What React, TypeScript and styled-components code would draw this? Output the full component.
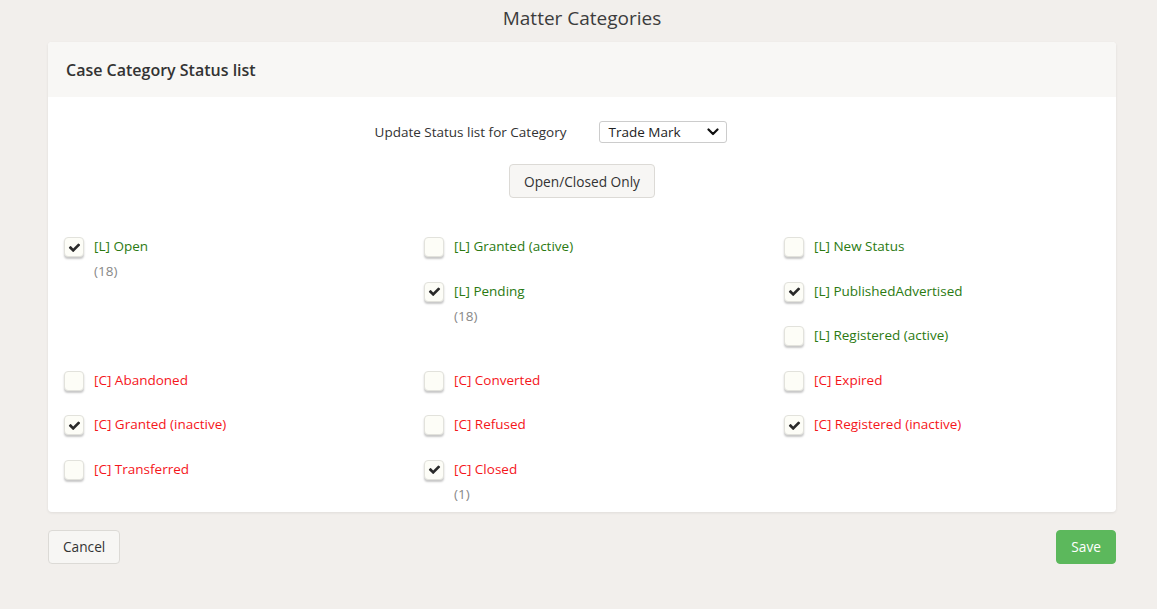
import * as React from 'react'
import styled, { createGlobalStyle } from 'styled-components'

const GlobalStyle = createGlobalStyle`
  html, body {
    margin: 0;
    padding: 0;
    background: #f2efec;
    font-family: 'Open Sans', 'Liberation Sans', sans-serif;
    color: #333;
  }
`

const Page = styled.div`
  width: 1068px;
  margin-left: 48px;
`

const PageTitle = styled.h1`
  margin: 0 0 6px;
  height: 36px;
  line-height: 36px;
  font-size: 19px;
  font-weight: 400;
  color: #3c3c3c;
  text-align: center;
`

const Card = styled.div`
  background: #fff;
  border-radius: 4px;
  box-shadow: 0 1px 3px rgb(0 0 0 / 8%);
  overflow: hidden;
`

const CardHeader = styled.div`
  height: 55px;
  display: flex;
  align-items: center;
  padding: 0 18px;
  background: #f8f7f5;
  font-size: 16px;
  font-weight: 600;
  color: #333;
`

const CardBody = styled.div`
  padding: 24px 16px 8px;
`

const CategoryRow = styled.div`
  display: flex;
  justify-content: center;
  align-items: center;
  gap: 33px;
  font-size: 13.5px;
  padding-right: 62px;
`

const SelectWrap = styled.div`
  position: relative;
  width: 128px;
  height: 22px;
`

const Select = styled.select`
  appearance: none;
  width: 100%;
  height: 100%;
  border: 1px solid #ccc;
  border-radius: 3px;
  background: #fff;
  padding: 0 8px;
  font-family: inherit;
  font-size: 13.5px;
  color: #222;
`

const Chevron = styled.svg`
  position: absolute;
  right: 8px;
  top: 7px;
  pointer-events: none;
`

const Center = styled.div`
  display: flex;
  justify-content: center;
  margin-top: 21px;
`

const Button = styled.button<{ $variant?: 'default' | 'success' }>`
  height: 34px;
  padding: 0 14px;
  border-radius: 4px;
  font-family: inherit;
  font-size: 13.7px;
  cursor: pointer;
  border: 1px solid ${(p) => (p.$variant === 'success' ? '#5cb85c' : '#dcdad6')};
  background: ${(p) => (p.$variant === 'success' ? '#5cb85c' : '#f7f6f4')};
  color: ${(p) => (p.$variant === 'success' ? '#fff' : '#333')};
`

const StatusGrid = styled.div`
  display: grid;
  grid-template-columns: repeat(3, 360px);
  grid-auto-rows: 44.6px;
  margin-top: 38px;
`

const Item = styled.label<{ $col: number; $row: number }>`
  grid-column: ${(p) => p.$col};
  grid-row: ${(p) => p.$row};
  display: flex;
  align-items: flex-start;
  gap: 10px;
  font-size: 13.5px;
  cursor: pointer;
`

const Box = styled.span`
  flex: none;
  width: 18px;
  height: 18px;
  margin-top: 1px;
  border: 1px solid #e2e2dc;
  border-radius: 4px;
  background: #fdfdf7;
  box-shadow: 0 2px 2px rgb(0 0 0 / 22%);
  display: flex;
  align-items: center;
  justify-content: center;
`

const Texts = styled.span`
  display: flex;
  flex-direction: column;
`

const Name = styled.span<{ $closed: boolean }>`
  line-height: 21px;
  color: ${(p) => (p.$closed ? '#f5161b' : '#2b7a12')};
`

const Count = styled.span`
  margin-top: 4px;
  line-height: 20px;
  color: #888;
`

const Footer = styled.div`
  display: flex;
  justify-content: space-between;
  margin-top: 18px;
`

const Check = () => (
  <svg width="13" height="13" viewBox="0 0 1792 1792">
    <path
      fill="#2a2a2a"
      d="M1671 566q0 40-28 68l-724 724-136 136q-28 28-68 28t-68-28l-136-136-362-362q-28-28-28-68t28-68l136-136q28-28 68-28t68 28l294 295 656-657q28-28 68-28t68 28l136 136q28 28 28 68z"
    />
  </svg>
)

type Status = {
  name: string
  col: number
  row: number
  checked: boolean
  count?: number
}

const statuses: Status[] = [
  { name: '[L] Open', col: 1, row: 1, checked: true, count: 18 },
  { name: '[L] Granted (active)', col: 2, row: 1, checked: false },
  { name: '[L] New Status', col: 3, row: 1, checked: false },
  { name: '[L] Pending', col: 2, row: 2, checked: true, count: 18 },
  { name: '[L] PublishedAdvertised', col: 3, row: 2, checked: true },
  { name: '[L] Registered (active)', col: 3, row: 3, checked: false },
  { name: '[C] Abandoned', col: 1, row: 4, checked: false },
  { name: '[C] Converted', col: 2, row: 4, checked: false },
  { name: '[C] Expired', col: 3, row: 4, checked: false },
  { name: '[C] Granted (inactive)', col: 1, row: 5, checked: true },
  { name: '[C] Refused', col: 2, row: 5, checked: false },
  { name: '[C] Registered (inactive)', col: 3, row: 5, checked: true },
  { name: '[C] Transferred', col: 1, row: 6, checked: false },
  { name: '[C] Closed', col: 2, row: 6, checked: true, count: 1 },
]

export default function App() {
  const [items, setItems] = React.useState(statuses)

  const toggle = (name: string) =>
    setItems((list) =>
      list.map((s) => (s.name === name ? { ...s, checked: !s.checked } : s))
    )

  return (
    <>
      <GlobalStyle />
      <Page>
        <PageTitle>Matter Categories</PageTitle>
        <Card>
          <CardHeader>Case Category Status list</CardHeader>
          <CardBody>
            <CategoryRow>
              <span>Update Status list for Category</span>
              <SelectWrap>
                <Select defaultValue="tm">
                  <option value="tm">Trade Mark</option>
                  <option value="pt">Patent</option>
                  <option value="ds">Design</option>
                </Select>
                <Chevron width="12" height="8" viewBox="0 0 12 8">
                  <path
                    d="M1.5 1.5 6 6l4.5-4.5"
                    fill="none"
                    stroke="#111"
                    strokeWidth="2.2"
                    strokeLinecap="round"
                    strokeLinejoin="round"
                  />
                </Chevron>
              </SelectWrap>
            </CategoryRow>
            <Center>
              <Button>Open/Closed Only</Button>
            </Center>
            <StatusGrid>
              {items.map((s) => (
                <Item
                  key={s.name}
                  $col={s.col}
                  $row={s.row}
                  onClick={() => toggle(s.name)}
                >
                  <Box>{s.checked && <Check />}</Box>
                  <Texts>
                    <Name $closed={s.name.startsWith('[C]')}>{s.name}</Name>
                    {s.count !== undefined && <Count>({s.count})</Count>}
                  </Texts>
                </Item>
              ))}
            </StatusGrid>
          </CardBody>
        </Card>
        <Footer>
          <Button>Cancel</Button>
          <Button $variant="success">Save</Button>
        </Footer>
      </Page>
    </>
  )
}
